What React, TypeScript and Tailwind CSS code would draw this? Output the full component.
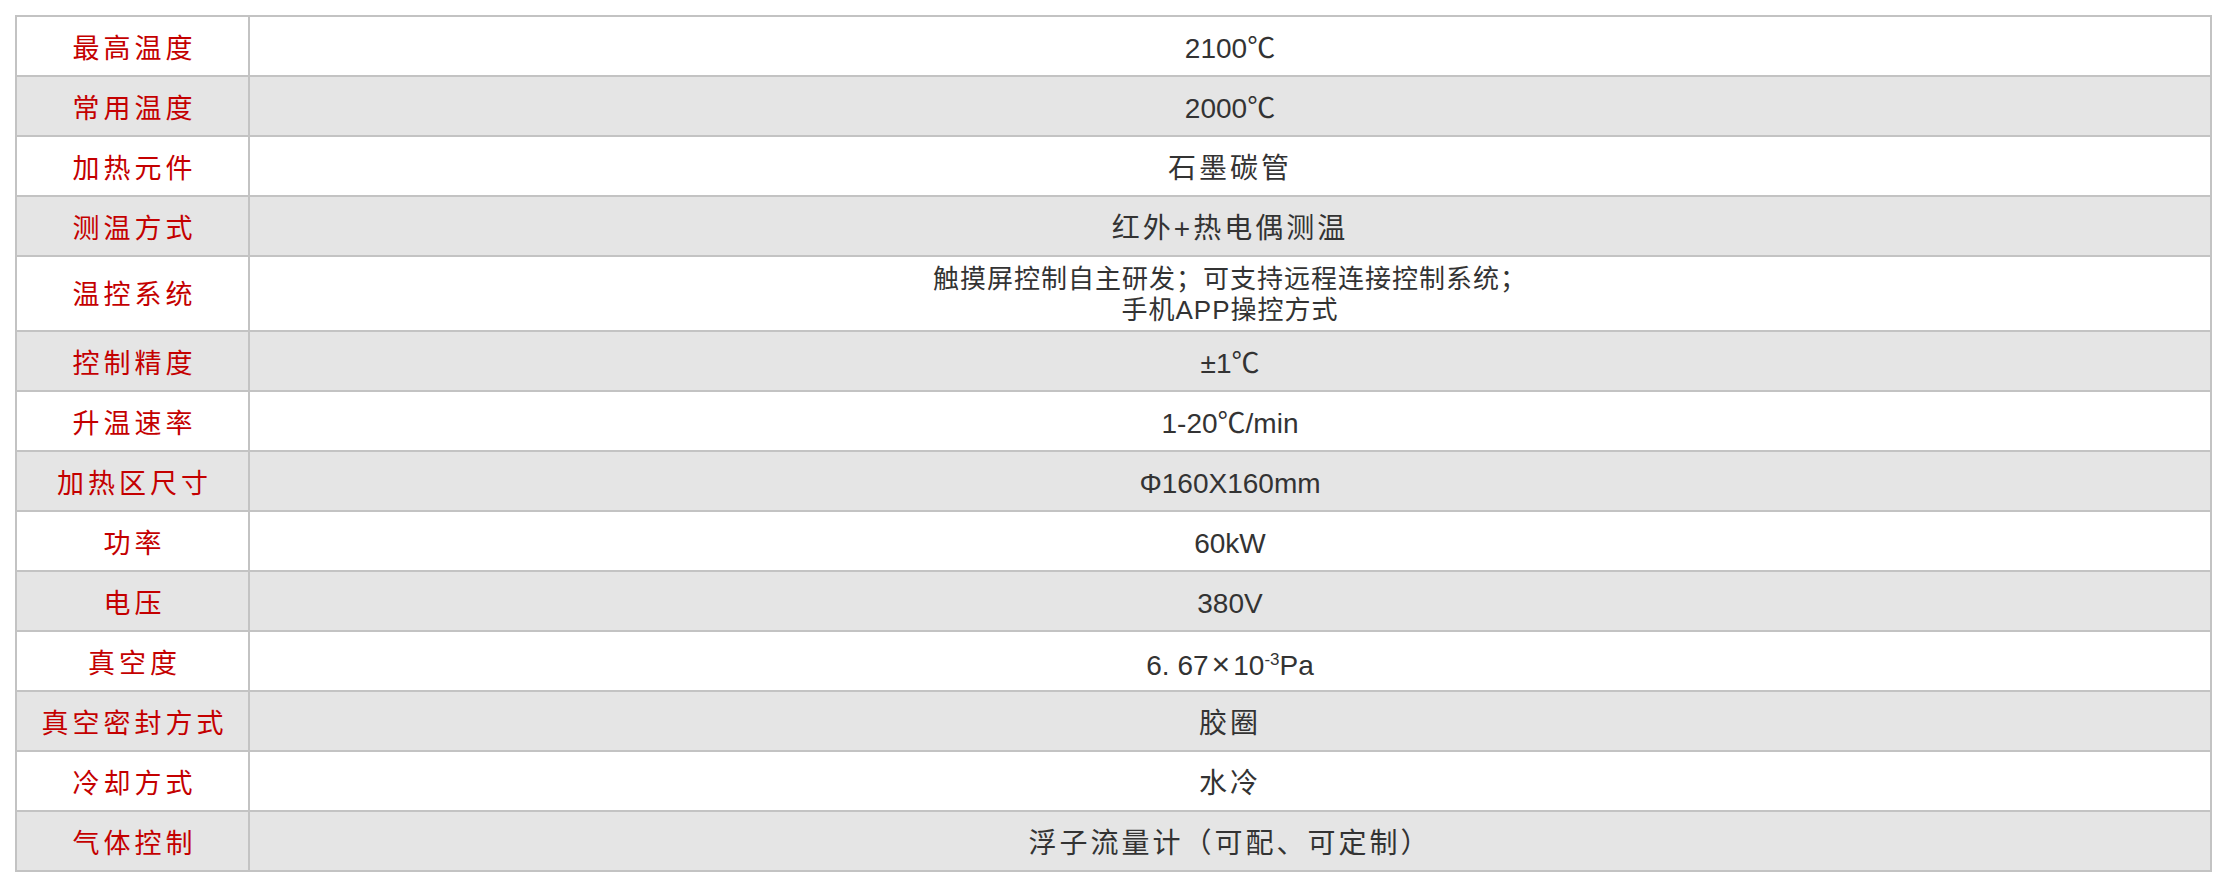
import React from "react";

type Row = { label: string; value: React.ReactNode; cjk?: boolean; tall?: boolean };

const ROWS: Row[] = [
  { label: "最高温度", value: "2100℃" },
  { label: "常用温度", value: "2000℃" },
  { label: "加热元件", value: "石墨碳管", cjk: true },
  { label: "测温方式", value: "红外+热电偶测温", cjk: true },
  {
    label: "温控系统",
    tall: true,
    value: (
      <div className="text-[26px] leading-[31px] tracking-[1px]">
        触摸屏控制自主研发；可支持远程连接控制系统；
        <br />
        手机APP操控方式
      </div>
    ),
  },
  { label: "控制精度", value: "±1℃" },
  { label: "升温速率", value: "1-20℃/min" },
  { label: "加热区尺寸", value: "Φ160X160mm" },
  { label: "功率", value: "60kW" },
  { label: "电压", value: "380V" },
  {
    label: "真空度",
    value: (
      <span>
        6.&nbsp;67<span className="px-[3px] text-[32px]">×</span>10
        <span className="inline-block -translate-y-[10px] text-[17px]">-3</span>Pa
      </span>
    ),
  },
  { label: "真空密封方式", value: "胶圈", cjk: true },
  { label: "冷却方式", value: "水冷", cjk: true },
  { label: "气体控制", value: "浮子流量计（可配、可定制）", cjk: true },
];

export default function App() {
  return (
    <div className="min-h-[888px] bg-white pl-[15px] pt-[15px]">
      <table className="w-[2197px] border-collapse border-2 border-[#c3c3c3] font-['Liberation_Sans','Noto_Sans_CJK_SC',sans-serif]">
        <tbody>
          {ROWS.map((r, i) => (
            <tr key={r.label} className={i % 2 === 1 ? "bg-[#e5e5e5]" : "bg-white"}>
              <td
                className={`w-[233px] border-2 border-[#c3c3c3] p-0 text-center align-middle text-[27px] leading-none tracking-[4px] text-[#c40000] ${r.tall ? "h-[75px] pt-[4px]" : "h-[60px] pt-[6px]"}`}
              >
                <span className="pl-[4px]">{r.label}</span>
              </td>
              <td
                className={`border-2 border-[#c3c3c3] p-0 text-center align-middle text-[28px] leading-none text-[#333333] ${r.tall ? "pt-[2px]" : "pt-[6px]"} ${r.cjk ? "tracking-[3px]" : ""}`}
              >
                {r.value}
              </td>
            </tr>
          ))}
        </tbody>
      </table>
    </div>
  );
}
